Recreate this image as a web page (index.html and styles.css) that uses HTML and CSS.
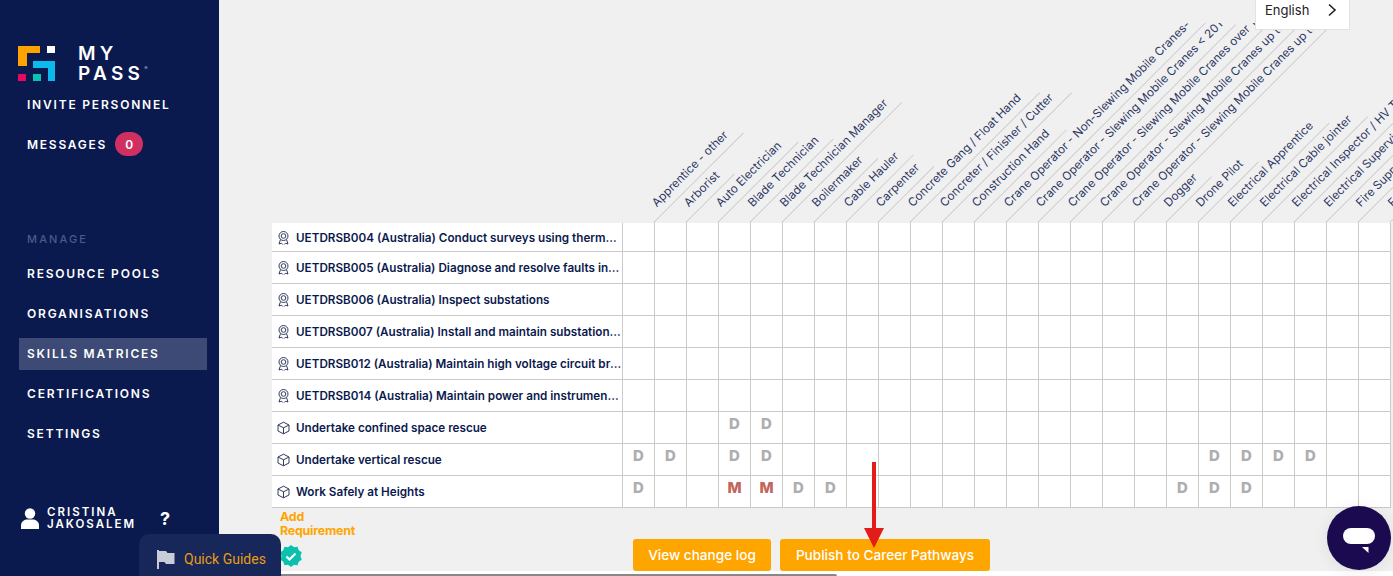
FILE: index.html
```html
<!DOCTYPE html>
<html lang="en">
<head>
<meta charset="utf-8">
<title>Skills Matrix</title>
<link rel="stylesheet" href="styles.css">
</head>
<body>
<aside class="sidebar">
  <div class="logo">
    <svg class="logo-mark" width="38" height="36" viewBox="0 0 38 36">
      <path fill="#ffa300" d="M0 0h22v7H9v13H0z"/>
      <rect fill="#fff" x="29" y="0" width="8" height="7"/>
      <path fill="#0cb9ec" d="M15 15h22v20h-7V22H15z"/>
      <rect fill="#e5095f" x="0" y="28" width="8" height="7"/>
      <rect fill="#08c2b4" x="15" y="28" width="8" height="7"/>
    </svg>
    <div class="logo-text">MY<br>PASS<sup>®</sup></div>
  </div>
  <nav class="nav-top">
    <a class="nav-item">INVITE PERSONNEL</a>
    <a class="nav-item msg">MESSAGES <span class="badge">0</span></a>
  </nav>
  <div class="nav-heading">MANAGE</div>
  <nav class="nav-main">
    <a class="nav-item">RESOURCE POOLS</a>
    <a class="nav-item">ORGANISATIONS</a>
    <a class="nav-item active">SKILLS MATRICES</a>
    <a class="nav-item">CERTIFICATIONS</a>
    <a class="nav-item">SETTINGS</a>
  </nav>
  <div class="user">
    <svg width="18" height="21" viewBox="0 0 18 21"><circle cx="9" cy="5.500" r="5.200" fill="#fff"/><path fill="#fff" d="M0 21v-3.500C0 14 3 11.500 6 11.500h6c3 0 6 2.500 6 6V21z"/></svg>
    <div class="user-name">CRISTINA<br>JAKOSALEM</div>
    <div class="help">?</div>
  </div>
</aside>

<main class="main">
  <div class="head-clip">
    <div class="heads">
      <div class="hd"><span class="lb" style="width:127px">Apprentice - other</span></div>
      <div class="hd"><span class="lb" style="width:69px">Arborist</span></div>
      <div class="hd"><span class="lb" style="width:114px">Auto Electrician</span></div>
      <div class="hd"><span class="lb" style="width:118px">Blade Technician</span></div>
      <div class="hd"><span class="lb" style="width:170px">Blade Technician Manager</span></div>
      <div class="hd"><span class="lb" style="width:91px">Boilermaker</span></div>
      <div class="hd"><span class="lb" style="width:96px">Cable Hauler</span></div>
      <div class="hd"><span class="lb" style="width:80px">Carpenter</span></div>
      <div class="hd"><span class="lb" style="width:184px">Concrete Gang / Float Hand</span></div>
      <div class="hd"><span class="lb" style="width:184px">Concreter / Finisher / Cutter</span></div>
      <div class="hd"><span class="lb" style="width:131px">Construction Hand</span></div>
      <div class="hd"><span class="lb" style="width:290px">Crane Operator - Non-Slewing Mobile Cranes- Up to 20T</span></div>
      <div class="hd"><span class="lb" style="width:280px">Crane Operator - Slewing Mobile Cranes &lt; 20T</span></div>
      <div class="hd"><span class="lb" style="width:280px">Crane Operator - Slewing Mobile Cranes over 100T</span></div>
      <div class="hd"><span class="lb" style="width:274px">Crane Operator - Slewing Mobile Cranes up to 60T</span></div>
      <div class="hd"><span class="lb" style="width:274px">Crane Operator - Slewing Mobile Cranes up to 100T</span></div>
      <div class="hd"><span class="lb" style="width:65px">Dogger</span></div>
      <div class="hd"><span class="lb" style="width:86px">Drone Pilot</span></div>
      <div class="hd"><span class="lb" style="width:141px">Electrical Apprentice</span></div>
      <div class="hd"><span class="lb" style="width:150px">Electrical Cable jointer</span></div>
      <div class="hd"><span class="lb" style="width:190px">Electrical Inspector / HV Tester</span></div>
      <div class="hd"><span class="lb" style="width:170px">Electrical Supervisor</span></div>
      <div class="hd"><span class="lb" style="width:140px">Fire Support</span></div>
      <div class="hd"><span class="lb" style="width:100px">Foreman</span></div>
    </div>
  </div>
  <table class="matrix">
    <colgroup><col class="c-name"></colgroup>
    <tbody>
      <tr class="first"><th><span class="nm"><svg class="ic"><use href="#award"/></svg><span class="tx">UETDRSB004 (Australia) Conduct surveys using thermal imaging equipment</span></span></th><td></td><td></td><td></td><td></td><td></td><td></td><td></td><td></td><td></td><td></td><td></td><td></td><td></td><td></td><td></td><td></td><td></td><td></td><td></td><td></td><td></td><td></td><td></td><td></td></tr>
      <tr><th><span class="nm"><svg class="ic"><use href="#award"/></svg><span class="tx">UETDRSB005 (Australia) Diagnose and resolve faults in substations</span></span></th><td></td><td></td><td></td><td></td><td></td><td></td><td></td><td></td><td></td><td></td><td></td><td></td><td></td><td></td><td></td><td></td><td></td><td></td><td></td><td></td><td></td><td></td><td></td><td></td></tr>
      <tr><th><span class="nm"><svg class="ic"><use href="#award"/></svg><span class="tx">UETDRSB006 (Australia) Inspect substations</span></span></th><td></td><td></td><td></td><td></td><td></td><td></td><td></td><td></td><td></td><td></td><td></td><td></td><td></td><td></td><td></td><td></td><td></td><td></td><td></td><td></td><td></td><td></td><td></td><td></td></tr>
      <tr><th><span class="nm"><svg class="ic"><use href="#award"/></svg><span class="tx">UETDRSB007 (Australia) Install and maintain substation equipment</span></span></th><td></td><td></td><td></td><td></td><td></td><td></td><td></td><td></td><td></td><td></td><td></td><td></td><td></td><td></td><td></td><td></td><td></td><td></td><td></td><td></td><td></td><td></td><td></td><td></td></tr>
      <tr><th><span class="nm"><svg class="ic"><use href="#award"/></svg><span class="tx">UETDRSB012 (Australia) Maintain high voltage circuit breakers</span></span></th><td></td><td></td><td></td><td></td><td></td><td></td><td></td><td></td><td></td><td></td><td></td><td></td><td></td><td></td><td></td><td></td><td></td><td></td><td></td><td></td><td></td><td></td><td></td><td></td></tr>
      <tr><th><span class="nm"><svg class="ic"><use href="#award"/></svg><span class="tx">UETDRSB014 (Australia) Maintain power and instrument transformers</span></span></th><td></td><td></td><td></td><td></td><td></td><td></td><td></td><td></td><td></td><td></td><td></td><td></td><td></td><td></td><td></td><td></td><td></td><td></td><td></td><td></td><td></td><td></td><td></td><td></td></tr>
      <tr><th><span class="nm"><svg class="ic"><use href="#cube"/></svg><span class="tx">Undertake confined space rescue</span></span></th><td></td><td></td><td></td><td class="d">D</td><td class="d">D</td><td></td><td></td><td></td><td></td><td></td><td></td><td></td><td></td><td></td><td></td><td></td><td></td><td></td><td></td><td></td><td></td><td></td><td></td><td></td></tr>
      <tr><th><span class="nm"><svg class="ic"><use href="#cube"/></svg><span class="tx">Undertake vertical rescue</span></span></th><td class="d">D</td><td class="d">D</td><td></td><td class="d">D</td><td class="d">D</td><td></td><td></td><td></td><td></td><td></td><td></td><td></td><td></td><td></td><td></td><td></td><td></td><td></td><td class="d">D</td><td class="d">D</td><td class="d">D</td><td class="d">D</td><td></td><td></td></tr>
      <tr><th><span class="nm"><svg class="ic"><use href="#cube"/></svg><span class="tx">Work Safely at Heights</span></span></th><td class="d">D</td><td></td><td></td><td class="m">M</td><td class="m">M</td><td class="d">D</td><td class="d">D</td><td></td><td></td><td></td><td></td><td></td><td></td><td></td><td></td><td></td><td></td><td class="d">D</td><td class="d">D</td><td class="d">D</td><td></td><td></td><td></td><td></td></tr>
    </tbody>
  </table>
  <div class="foot">
    <div class="add">
      <a class="add-link">Add Requirement</a>
      <svg class="verified" width="22" height="22" viewBox="0 0 22 22"><path fill="#0cc0ae" d="M11 0l3 2.200 3.600-.4 1.100 3.500 3 2-1.200 3.700 1.200 3.700-3 2-1.100 3.500-3.600-.4L11 22l-3-2.200-3.600.4-1.100-3.500-3-2 1.200-3.700L.3 7.300l3-2 1.100-3.500 3.600.4z"/><path fill="none" stroke="#fff" stroke-width="2.200" d="M6.500 11.500l3 3 6-6"/></svg>
    </div>
    <div class="actions">
      <button class="btn log">View change log</button>
      <button class="btn pub">Publish to Career Pathways</button>
    </div>
  </div>
  <div class="scroll"><div class="thumb"></div></div>
</main>

<div class="lang">English <svg width="10" height="14" viewBox="0 0 10 14"><path d="M2 1.500L8 7l-6 5.500" fill="none" stroke="#222" stroke-width="1.600"/></svg></div>

<div class="guides">
  <svg width="18" height="19" viewBox="0 0 18 19"><path fill="#c9cdd8" d="M0 0h2v19H0zM2 1h7l1.500 2H17.500v11H9l-1.500-2H2z"/></svg>
  <span>Quick Guides</span>
</div>

<svg class="arrow" width="22" height="88" viewBox="0 0 22 88"><rect x="9" y="0" width="4" height="68" fill="#e21b1b"/><path d="M1 66h20L11 86z" fill="#e21b1b"/></svg>

<div class="chat"><svg width="32" height="26" viewBox="0 0 32 26"><rect width="32" height="16" rx="8" fill="#fff"/><path d="M19 19h6.500v6z" fill="#fff"/></svg></div>

<svg class="defs" width="0" height="0">
  <symbol id="award" viewBox="0 0 12 14"><g fill="none" stroke="#333c5c" stroke-width="1"><circle cx="6" cy="5" r="4.500"/><circle cx="6" cy="5" r="2.300"/><path d="M3 8.500L1.500 13l2.500-.8L5.200 13.500M9 8.500l1.500 4.500-2.500-.8-1.200 1.300"/></g></symbol>
  <symbol id="cube" viewBox="0 0 13 13"><g fill="none" stroke="#333c5c" stroke-width="1" stroke-linejoin="round"><path d="M6.500.7l5.500 2.800v6L6.500 12.300 1 9.500v-6z"/><path d="M1 3.500l5.500 2.800L12 3.500M6.500 6.300v6"/></g></symbol>
</svg>
</body>
</html>
```
FILE: styles.css
```css
* { box-sizing: border-box; }
html, body { margin: 0; height: 100%; overflow: hidden; }
body {
  display: flex;
  width: 1393px;
  height: 576px;
  background: #f0f0f0;
  font-family: Inter, "Liberation Sans", sans-serif;
  color: #0b1a4e;
}
.sidebar {
  width: 219px;
  flex: none;
  background: #0a1a4f;
  color: #fff;
  display: flex;
  flex-direction: column;
  padding: 46px 12px 0 19px;
}
.logo { display: flex; gap: 22px; height: 42px; margin-left: -1px; }
.logo-mark { flex: none; }
.logo-text {
  font-size: 19px;
  line-height: 20px;
  font-weight: 600;
  letter-spacing: 4.300px;
  margin-top: -2px;
}
.logo-text sup { font-size: 5px; letter-spacing: 0; vertical-align: 10px; line-height: 0; color: #aab; }
.nav-item {
  display: flex;
  align-items: center;
  height: 32px;
  padding-left: 8px;
  font-size: 12px;
  font-weight: 600;
  letter-spacing: 1.800px;
  white-space: nowrap;
}
.msg { margin-top: 8px; gap: 8px; letter-spacing: 1.750px; }
.badge {
  display: flex;
  justify-content: center;
  align-items: center;
  width: 28px;
  height: 24px;
  border-radius: 12px;
  background: #cf3061;
  letter-spacing: 0;
  font-size: 12px;
}
.nav-heading {
  margin: 70px 0 0 8px;
  height: 18px;
  line-height: 18px;
  font-size: 11px;
  font-weight: 500;
  letter-spacing: 2.100px;
  color: #4c5b86;
}
.nav-main { display: flex; flex-direction: column; gap: 8px; margin-top: 10px; }
.nav-main .nav-item { padding-bottom: 1px; }
.active { background: #3d4a75; }
.user { display: flex; align-items: center; margin: 56px 0 0 2px; }
.user-name {
  margin-left: 8px;
  font-size: 11.500px;
  line-height: 12px;
  font-weight: 600;
  letter-spacing: 2px;
}
.help { margin-left: 24px; font-size: 18px; font-weight: 700; }

.main { flex: 1; min-width: 0; padding: 23px 0 0 53px; display: flex; flex-direction: column; position: relative; }
.head-clip { height: 200px; overflow: hidden; margin-right: -2px; }
.heads { display: flex; height: 200px; margin-left: 350px; }
.hd { width: 32px; flex: none; position: relative; }
.lb {
  position: absolute;
  left: 100%;
  bottom: 0;
  height: 22px;
  padding-left: 13px;
  line-height: 18px;
  font-size: 11.700px;
  color: #2a3563;
  white-space: nowrap;
  overflow: hidden;
  border-bottom: 1px solid #cfcfcf;
  transform: rotate(-45deg);
  transform-origin: 0 100%;
}
.matrix {
  width: 1119px;
  table-layout: fixed;
  border-collapse: separate;
  border-spacing: 0;
  background: #fff;
}
.c-name { width: 351px; }
.matrix th, .matrix td {
  height: 32px;
  padding: 0;
  border-bottom: 1px solid #cacaca;
  border-right: 1px solid #cacaca;
}
.matrix .first th, .matrix .first td { height: 29px; }
.matrix th { text-align: left; font-weight: 600; }
.nm { display: flex; align-items: center; padding: 1px 0 0 5px; gap: 6px; }
.ic { width: 13px; height: 14px; flex: none; }
.tx { font-size: 11.700px; white-space: nowrap; overflow: hidden; text-overflow: ellipsis; width: 326px; color: #0b1a4e; }
.matrix td { text-align: center; vertical-align: top; font-size: 15px; font-weight: 800; line-height: 24px; }
.d { color: #adadad; }
.m { color: #c2655c; }
.foot { display: flex; height: 64px; }
.add { width: 80px; flex: none; padding: 2px 0 0 8px; }
.add-link { display: block; font-size: 12.400px; line-height: 14px; font-weight: 700; color: #ffa500; letter-spacing: -.2px; }
.verified { display: block; margin-top: 7px; }
.actions { display: flex; gap: 9px; padding: 31px 0 0 281px; align-items: flex-start; }
.btn {
  height: 32px;
  padding: 0;
  border: 0;
  border-radius: 3px;
  background: #ffa500;
  color: #fff;
  font: 500 13.600px Inter, sans-serif;
}
.log { width: 138px; }
.pub { width: 210px; }
.scroll { position: absolute; left: 0; right: 0; bottom: 0; height: 5px; background: #fff; }
.thumb { width: 618px; height: 2px; margin-top: 3px; background: #888; border-radius: 0 3px 0 0; }
.lang {
  position: absolute;
  left: 1255px;
  top: 0;
  width: 95px;
  height: 30px;
  padding: 0 12px 9px 9px;
  display: flex;
  align-items: center;
  justify-content: space-between;
  background: #fff;
  border: solid #e3e3e3;
  border-width: 0 1px 1px;
  font: 13px Inter, sans-serif;
  color: #222;
}
.guides {
  position: absolute;
  left: 139px;
  bottom: 0;
  width: 142px;
  height: 42px;
  padding: 8px 0 0 18px;
  display: flex;
  align-items: center;
  gap: 9px;
  border-radius: 10px 10px 0 0;
  background: #17275a;
  font: 14px Roboto, sans-serif;
  color: #e99c13;
}
.arrow { position: absolute; left: 863px; top: 462px; }
.chat {
  position: absolute;
  left: 1327px;
  top: 506px;
  width: 64px;
  height: 64px;
  border-radius: 50%;
  background: #1b0a4f;
  box-shadow: 0 2px 16px rgba(0,0,0,.08);
  display: flex;
  align-items: center;
  justify-content: center;
  padding-top: 5px;
}
.defs { position: absolute; }
```
